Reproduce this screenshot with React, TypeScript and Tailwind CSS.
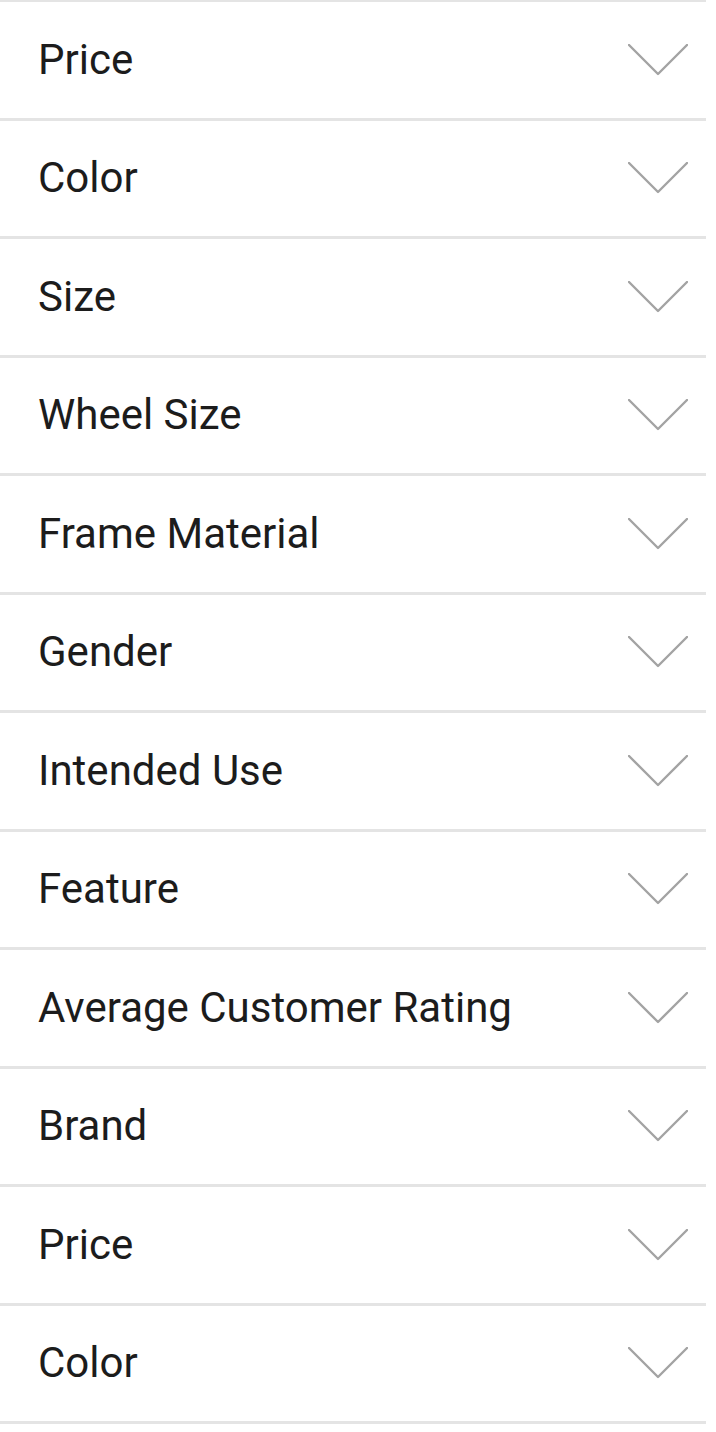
const filters = [
  "Price",
  "Color",
  "Size",
  "Wheel Size",
  "Frame Material",
  "Gender",
  "Intended Use",
  "Feature",
  "Average Customer Rating",
  "Brand",
  "Price",
  "Color",
];

function Chevron() {
  return (
    <svg width="60" height="32" viewBox="0 0 60 32" fill="none" className="shrink-0">
      <path d="M1 1 L30 30 L59 1" stroke="#a3a3a3" strokeWidth="2.4" strokeLinecap="round" strokeLinejoin="round" />
    </svg>
  );
}

export default function App() {
  return (
    <main className="min-h-screen bg-white font-['Roboto',sans-serif]">
      <ul className="border-t-[2px] border-[#e4e4e4] w-[706px]">
        {filters.map((label, i) => (
          <li
            key={i}
            className="h-[118.5px] flex items-center justify-between pl-[38px] pr-[18px] border-b-[3px] border-[#e4e4e4]"
          >
            <span className="text-[42px] text-[#1c1c1c] leading-none">{label}</span>
            <Chevron />
          </li>
        ))}
      </ul>
    </main>
  );
}
